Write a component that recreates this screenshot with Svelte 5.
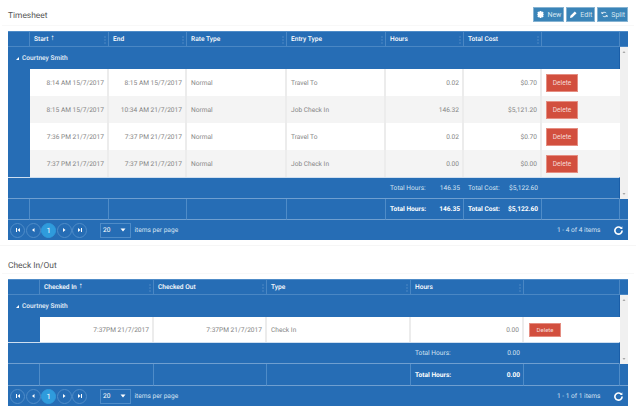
<script>
  const timesheet = {
    title: 'Timesheet',
    cols: [22, 79, 78, 100, 99, 78, 78, 78],
    heads: ['Start', 'End', 'Rate Type', 'Entry Type', 'Hours', 'Total Cost'],
    rowHeight: 27,
    aligns: ['r', 'r', 'l', 'l', 'r', 'r'],
    rows: [
      ['8:14 AM 15/7/2017', '8:15 AM 15/7/2017', 'Normal', 'Travel To', '0.02', '$0.70'],
      ['8:15 AM 15/7/2017', '10:34 AM 21/7/2017', 'Normal', 'Job Check In', '146.32', '$5,121.20'],
      ['7:36 PM 21/7/2017', '7:37 PM 21/7/2017', 'Normal', 'Travel To', '0.02', '$0.70'],
      ['7:37 PM 21/7/2017', '7:37 PM 21/7/2017', 'Normal', 'Job Check In', '0.00', '$0.00']
    ],
    totals: [null, null, null, null, ['Total Hours:', '146.35'], ['Total Cost:', '$5,122.60']],
    range: '1 - 4 of 4 items'
  };

  const checkins = {
    title: 'Check In/Out',
    cols: [32, 114, 113, 144, 113, 96],
    heads: ['Checked In', 'Checked Out', 'Type', 'Hours'],
    rowHeight: 25,
    small: true,
    aligns: ['r', 'r', 'l', 'r'],
    rows: [['7:37PM 21/7/2017', '7:37PM 21/7/2017', 'Check In', '0.00']],
    totals: [null, null, null, ['Total Hours:', '0.00']],
    range: '1 - 1 of 1 items'
  };

  const template = (cols) => cols.map((c) => c + 'px').join(' ');
</script>

{#snippet dots()}
  <svg class="dots" width="2" height="8" viewBox="0 0 2 8"><circle cx="1" cy="1" r=".7" /><circle cx="1" cy="4" r=".7" /><circle cx="1" cy="7" r=".7" /></svg>
{/snippet}

{#snippet pageBtn(kind)}
  <span class="page-btn">
    <svg width="6" height="6" viewBox="0 0 6 6" fill="#fff">
      {#if kind === 'first'}<path d="M1 1h1v4H1zM5 1v4L2.500 3z" />{/if}
      {#if kind === 'prev'}<path d="M4.500 1v4L2 3z" />{/if}
      {#if kind === 'next'}<path d="M2 1v4l2.500-2z" />{/if}
      {#if kind === 'last'}<path d="M1 1v4l2.500-2zM4 1h1v4H4z" />{/if}
    </svg>
  </span>
{/snippet}

{#snippet grid(t)}
  <div class="grid" class:tall={t.small}>
    <div class="head" style="grid-template-columns: {template(t.cols)} 8px">
      <div class="hcell"></div>
      {#each t.heads as h, i}
        <div class="hcell">
          <span>{h}</span>
          {#if i === 0}<span class="sort">↑</span>{/if}
          {@render dots()}
        </div>
      {/each}
      <div class="hcell"></div>
      <div class="hcell end"></div>
    </div>

    <div class="body">
      <div class="content">
        <div class="group"><span class="caret"></span>Courtney Smith</div>
        {#each t.rows as row, r}
          <div class="row" class:alt={r % 2 === 1} style="grid-template-columns: {template(t.cols)}; height: {t.rowHeight}px">
            <div class="indent"></div>
            {#each row as value, i}
              <div class="cell" class:right={t.aligns[i] === 'r'}>{value}</div>
            {/each}
            <div class="cell"><button class="delete" class:small={t.small}>Delete</button></div>
          </div>
        {/each}
        <div class="group-foot" style="grid-template-columns: {template(t.cols)}">
          <div></div>
          {#each t.totals as total}
            <div class="total">
              {#if total}<span>{total[0]}</span><span>{total[1]}</span>{/if}
            </div>
          {/each}
          <div></div>
        </div>
      </div>
      <div class="scrollbar">
        <svg width="8" height="8" viewBox="0 0 8 8"><path d="M2.500 5 4 3l1.500 2z" fill="#a8a8a8" /></svg>
        <svg width="8" height="8" viewBox="0 0 8 8"><path d="M2.500 3 4 5l1.500-2z" fill="#a8a8a8" /></svg>
      </div>
    </div>

    <div class="foot" style="grid-template-columns: {template(t.cols)} 8px">
      <div class="fcell"></div>
      {#each t.totals as total}
        <div class="fcell total">
          {#if total}<span>{total[0]}</span><span>{total[1]}</span>{/if}
        </div>
      {/each}
      <div class="fcell"></div>
      <div class="fcell end"></div>
    </div>

    <div class="pager">
      {@render pageBtn('first')}
      {@render pageBtn('prev')}
      <span class="page-btn current">1</span>
      {@render pageBtn('next')}
      {@render pageBtn('last')}
      <span class="size">20
        <svg width="6" height="4" viewBox="0 0 6 4"><path d="M.5.500h5L3 3.500z" fill="#fff" /></svg>
      </span>
      <span class="per">items per page</span>
      <span class="range">{t.range}</span>
      <svg class="refresh" width="9" height="9" viewBox="0 0 10 10" fill="none">
        <path d="M7.800 2.200A4 4 0 1 0 9 5" stroke="#fff" stroke-width="1.800" />
        <path d="M6.500 3.200 9.400 3.400 9.200.400z" fill="#fff" />
      </svg>
    </div>
  </div>
{/snippet}

<main>
  <section class="panel first">
    <header>
      <h2>{timesheet.title}</h2>
      <div class="actions">
        <button class="action">
          <svg width="7" height="7" viewBox="0 0 8 8" fill="#fff"><path d="M3 0h2l.3 1.400 1.300-.7L7.700 2.200l-1 1L8 4l-1.300.8 1 1-1.100 1.500-1.300-.7L5 8H3l-.3-1.400-1.300.7L.3 5.800l1-1L0 4l1.300-.8-1-1L1.400.7l1.300.7z" /></svg>
          New
        </button>
        <button class="action">
          <svg width="7" height="7" viewBox="0 0 8 8" fill="#fff"><path d="M0 8l.5-2.500L5.500.500l2 2-5 5z" /></svg>
          Edit
        </button>
        <button class="action">
          <svg width="7" height="7" viewBox="0 0 8 7" fill="none" stroke="#fff" stroke-width=".9"><path d="M1 2.200C2 .8 4.500.4 6 1.800M7 4.800C6 6.200 3.500 6.600 2 5.200M.8.600l.2 1.800 1.700-.2M7.200 6.400 7 4.600l-1.700.2" /></svg>
          Split
        </button>
      </div>
    </header>
    {@render grid(timesheet)}
  </section>

  <section class="panel">
    <header class="plain">
      <h2>{checkins.title}</h2>
    </header>
    {@render grid(checkins)}
  </section>
</main>

<style>
  :global(body) {
    margin: 0;
    background: #fff;
  }

  main {
    width: 636px;
    height: 412px;
    overflow: hidden;
    font-family: Roboto, "Liberation Sans", sans-serif;
    font-size: 6.6px;
    color: #777;
    text-rendering: geometricPrecision;
  }

  .panel {
    padding: 0 8px;
  }

  .panel.first {
    padding-bottom: 5px;
    margin-bottom: 14px;
    box-shadow: 0 1px 0 #f6f6f6;
  }

  header {
    height: 26px;
    margin: 0 -6px 5px;
    padding: 6px 6px 0;
    box-sizing: border-box;
    border-bottom: 1px solid #f8f8f8;
    display: flex;
    align-items: center;
    justify-content: space-between;
  }

  header.plain {
    height: 15px;
    padding-top: 0;
    margin-bottom: 5px;
  }

  h2 {
    margin: 0;
    font-weight: 400;
    font-size: 8.4px;
    color: #555;
  }

  .actions {
    display: flex;
    gap: 2px;
    margin-top: -2px;
  }

  .action {
    height: 15px;
    padding: 0 2px 0 3px;
    display: flex;
    align-items: center;
    gap: 3px;
    font: 7px Roboto, sans-serif;
    color: #d6e6f1;
    background: #3a84b8;
    border: 1px solid #86b3d2;
  }

  .grid {
    background: #266db5;
    color: #fff;
    border-top: 1px solid #4f8cc8;
  }

  .head,
  .foot {
    display: grid;
  }

  .hcell {
    height: 14px;
    padding-left: 4px;
    display: flex;
    align-items: center;
    gap: 2px;
    font-weight: 500;
    border-left: 1px solid #4a87c4;
    border-bottom: 1px solid #4a87c4;
    margin-left: -1px;
    position: relative;
  }

  .hcell:first-child {
    border-left: 0;
    margin-left: 0;
  }

  .sort {
    font-size: 8px;
    font-weight: 700;
    margin-top: -3px;
  }

  .dots {
    position: absolute;
    right: 3px;
    top: 4px;
    fill: #5b93c9;
  }

  .body {
    display: flex;
  }

  .content {
    flex: 1;
    min-width: 0;
  }

  .group {
    height: 22px;
    padding-left: 8px;
    display: flex;
    align-items: center;
    gap: 3px;
    font-weight: 500;
    color: #e8f0f8;
    border-right: 1px solid #1a5ea8;
  }

  .caret {
    width: 0;
    height: 0;
    border-style: solid;
    border-width: 0 0 3px 3px;
    border-color: transparent transparent #fff transparent;
  }

  .row {
    display: grid;
    background: #fff;
    color: #858585;
  }

  .row.alt {
    background: #f4f4f4;
  }

  .indent {
    background: #266db5;
  }

  .cell {
    display: flex;
    align-items: center;
    padding: 0 3px 0 4px;
    border-right: 2px solid #ececec;
    white-space: nowrap;
    box-sizing: border-box;
  }

  .cell:last-child {
    border-right: 0;
  }

  .cell.right {
    justify-content: flex-end;
  }

  .delete {
    width: 32px;
    height: 18px;
    padding: 0;
    font: 6.6px Roboto, sans-serif;
    color: #f6dcd8;
    background: #d24f3e;
    border: 1px solid #e58e82;
  }

  .delete.small {
    height: 14px;
    font-size: 6px;
    margin-left: 1px;
  }

  .group-foot {
    display: grid;
    height: 22px;
    border-top: 1px solid #cfdff0;
    box-sizing: border-box;
    border-bottom: 1px solid #6f9fd0;
    border-right: 1px solid #1a5ea8;
    color: #d5e3f2;
  }

  .total {
    display: flex;
    align-items: center;
    justify-content: space-between;
    padding: 0 4px;
    white-space: nowrap;
  }

  .scrollbar {
    width: 8px;
    background: #f0f0f0;
    display: flex;
    flex-direction: column;
    justify-content: space-between;
    padding: 1px 0;
    box-sizing: border-box;
  }

  .fcell {
    height: 21px;
    border-left: 1px solid #4f8cc8;
    border-bottom: 1px solid #6f9fd0;
    margin-left: -1px;
    box-sizing: border-box;
  }

  .fcell:first-child {
    border-left: 0;
    margin-left: 0;
  }

  .tall .fcell {
    height: 22px;
  }

  .fcell.total {
    display: flex;
    font-weight: 700;
    color: #fff;
  }

  .pager {
    height: 20px;
    display: flex;
    align-items: center;
    padding: 0 4px 0 2px;
    gap: .5px;
    color: #d5e3f2;
  }

  .page-btn {
    width: 13px;
    height: 13px;
    border: 1px solid #4f8cc8;
    border-radius: 50%;
    display: flex;
    align-items: center;
    justify-content: center;
    color: #fff;
    font-size: 7.5px;
    flex: none;
  }

  .page-btn.current {
    background: #2f9bdc;
    border-color: #2f9bdc;
  }

  .size {
    margin-left: 12.5px;
    width: 31px;
    height: 15px;
    padding: 0 4px 0 2px;
    box-sizing: border-box;
    border: 1px solid #4f8cc8;
    display: flex;
    align-items: center;
    justify-content: space-between;
    color: #fff;
  }

  .per {
    margin-left: 3px;
  }

  .range {
    margin-left: auto;
    margin-right: 13px;
  }

  .refresh {
    margin-right: 1px;
  }
</style>
